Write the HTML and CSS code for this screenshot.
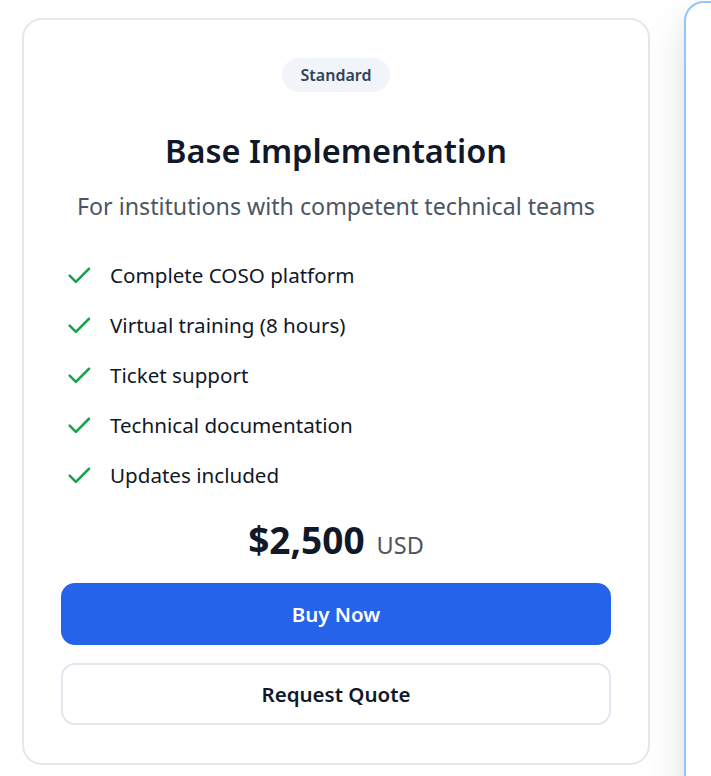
FILE: index.html
```html
<!DOCTYPE html>
<html lang="en">
<head>
<meta charset="utf-8">
<link rel="stylesheet" href="styles.css">
</head>
<body>
<div class="row">
  <div class="card">
    <span class="badge">Standard</span>
    <h2 class="title">Base Implementation</h2>
    <p class="subtitle">For institutions with competent technical teams</p>
    <ul class="features">
      <li><svg class="check" viewBox="0 0 24 24"><path d="M4.5 12.5l5 5L20 7"/></svg>Complete COSO platform</li>
      <li><svg class="check" viewBox="0 0 24 24"><path d="M4.5 12.5l5 5L20 7"/></svg>Virtual training (8 hours)</li>
      <li><svg class="check" viewBox="0 0 24 24"><path d="M4.5 12.5l5 5L20 7"/></svg>Ticket support</li>
      <li><svg class="check" viewBox="0 0 24 24"><path d="M4.5 12.5l5 5L20 7"/></svg>Technical documentation</li>
      <li><svg class="check" viewBox="0 0 24 24"><path d="M4.5 12.5l5 5L20 7"/></svg>Updates included</li>
    </ul>
    <div class="price"><span class="amount">$2,500</span><span class="currency">USD</span></div>
    <button class="btn btn-primary">Buy Now</button>
    <button class="btn btn-outline">Request Quote</button>
  </div>
  <div class="card card-featured"></div>
</div>
</body>
</html>
```
FILE: styles.css
```css
* { box-sizing: border-box; }
html, body { margin: 0; padding: 0; background: #ffffff; }
body {
  font-family: "Noto Sans", "Open Sans", sans-serif;
  color: #111827;
  overflow: hidden;
  width: 711px;
  height: 776px;
}
.row {
  display: flex;
  gap: 34px;
  padding: 18px 0 0 22px;
  align-items: flex-start;
  width: 711px;
  height: 776px;
  overflow: hidden;
}
.card {
  flex: 0 0 628px;
  height: 747px;
  border: 2px solid #e5e7eb;
  border-radius: 20px;
  background: #fff;
  padding: 38px 37px;
  display: flex;
  flex-direction: column;
  align-items: center;
}
.card-featured {
  flex: 0 0 628px;
  height: 800px;
  margin-top: -17px;
  border-color: #93c5fd;
  box-shadow: 0 20px 45px rgba(0,0,0,0.11), 0 6px 14px rgba(0,0,0,0.04);
}
.badge {
  display: inline-block;
  background: #f1f5f9;
  color: #334155;
  font-size: 16px;
  font-weight: 600;
  height: 34px;
  line-height: 34px;
  padding: 0 19px;
  border-radius: 17px;
}
.title {
  margin: 34px 0 0;
  font-size: 32.5px;
  font-weight: 600;
  line-height: 50px;
  color: #111827;
}
.subtitle {
  margin: 15px 0 0;
  font-size: 23.2px;
  line-height: 30px;
  color: #4b5563;
}
.features {
  list-style: none;
  margin: 39px 0 0;
  padding: 0;
  align-self: stretch;
  display: flex;
  flex-direction: column;
  gap: 20px;
}
.features li {
  display: flex;
  align-items: center;
  gap: 16px;
  font-size: 20.6px;
  line-height: 30px;
  padding-left: 3px;
}
.check {
  width: 30px;
  height: 30px;
  flex: none;
  fill: none;
  stroke: #16a34a;
  stroke-width: 2;
  stroke-linecap: round;
  stroke-linejoin: round;
}
.price {
  margin-top: 28px;
  display: flex;
  align-items: baseline;
  gap: 12px;
}
.amount {
  font-size: 37px;
  font-weight: 700;
  line-height: 44px;
  color: #111827;
}
.currency {
  font-size: 23.5px;
  color: #4b5563;
}
.btn {
  align-self: stretch;
  height: 62px;
  border-radius: 14px;
  font-family: inherit;
  font-size: 20.5px;
  font-weight: 600;
  cursor: pointer;
}
.btn-primary {
  margin-top: 21px;
  background: #2563eb;
  color: #fff;
  border: none;
}
.btn-outline {
  margin-top: 18px;
  background: #fff;
  color: #111827;
  border: 2px solid #e2e8f0;
}
```
